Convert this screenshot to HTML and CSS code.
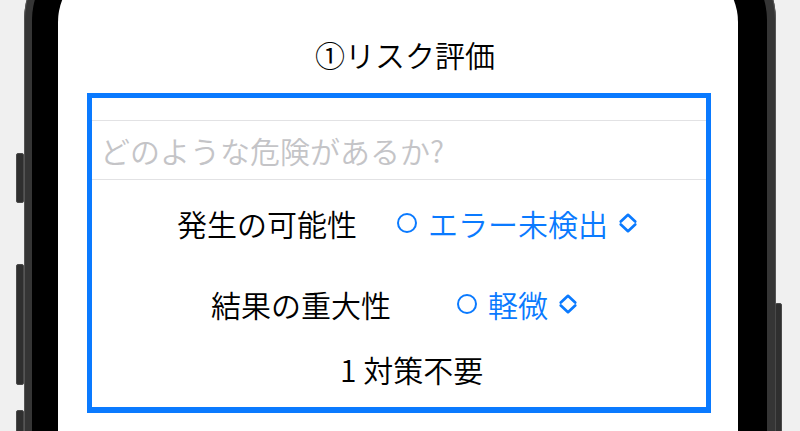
FILE: index.html
```html
<!DOCTYPE html>
<html lang="ja">
<head>
<meta charset="utf-8">
<title>リスク評価</title>
<link rel="stylesheet" href="styles.css">
</head>
<body>
<div class="stage">
  <div class="rail rail-left">
    <span class="key key-mute"></span>
    <span class="key key-vol"></span>
    <span class="key key-vol2"></span>
  </div>
  <div class="phone">
    <div class="bezel">
      <div class="screen">
        <h1 class="title">①リスク評価</h1>
        <section class="card">
          <div class="spacer"></div>
          <div class="field">どのような危険があるか?</div>
          <div class="row row-likely">
            <span class="label">発生の可能性</span>
            <span class="picker">
              <span class="circle"></span>
              <span class="value">エラー未検出</span>
              <svg class="chev" width="18" height="20" viewBox="0 0 18 20"><path d="M1.8 8.5 L9 1.8 L16.2 8.5 M1.8 11.5 L9 18.2 L16.2 11.5" fill="none" stroke="#0a7aff" stroke-width="2.7" stroke-linecap="round" stroke-linejoin="round"/></svg>
            </span>
          </div>
          <div class="row row-severity">
            <span class="label">結果の重大性</span>
            <span class="picker">
              <span class="circle"></span>
              <span class="value">軽微</span>
              <svg class="chev" width="18" height="20" viewBox="0 0 18 20"><path d="M1.8 8.5 L9 1.8 L16.2 8.5 M1.8 11.5 L9 18.2 L16.2 11.5" fill="none" stroke="#0a7aff" stroke-width="2.7" stroke-linecap="round" stroke-linejoin="round"/></svg>
            </span>
          </div>
          <div class="row row-result">1 対策不要</div>
        </section>
      </div>
    </div>
  </div>
  <div class="rail rail-right">
    <span class="key key-power"></span>
  </div>
</div>
</body>
</html>
```
FILE: styles.css
```css
html, body {
  margin: 0;
  padding: 0;
}
body {
  width: 800px;
  height: 431px;
  overflow: hidden;
  background: #f0f0f0;
  font-family: "Noto Sans CJK JP", "Noto Sans", sans-serif;
}
.stage {
  display: flex;
  align-items: flex-start;
  margin-top: -60px;
}
.rail {
  display: flex;
  flex-direction: column;
}
.rail-left {
  width: 8px;
  margin-left: 16px;
}
.rail-right {
  width: 7px;
  margin-left: -1px;
}
.key {
  display: block;
  background: #2f2f2f;
  border: 1px solid #4a4a4a;
  border-radius: 2px;
  box-sizing: border-box;
}
.key-mute { margin-top: 213px; height: 50px; }
.key-vol { margin-top: 61px; height: 121px; }
.key-vol2 { margin-top: 25px; height: 80px; }
.key-power { margin-top: 363px; height: 200px; }

.phone {
  width: 752px;
  flex: none;
  box-sizing: border-box;
  padding: 8px 9px 0 8px;
  background: #353535;
  border-radius: 80px 80px 0 0;
  box-shadow: inset 1px 0 0 #555, inset -1px 0 0 #555;
}
.bezel {
  background: #000;
  padding: 14px 29px 0 26px;
  border-radius: 72px 72px 0 0;
}
.screen {
  background: #fff;
  height: 560px;
  border-radius: 60px 60px 0 0;
  padding-top: 72px;
  box-sizing: border-box;
}
.title {
  margin: 0;
  font-size: 30px;
  font-weight: 350;
  line-height: 40px;
  height: 40px;
  text-align: center;
  color: #000;
  padding-left: 14px;
}
.card {
  margin: 19px 0 0 29px;
  width: 624px;
  height: 320px;
  box-sizing: border-box;
  border: 5px solid #0a7aff;
  border-bottom-width: 6px;
  display: flex;
  flex-direction: column;
  font-size: 30px;
  font-weight: 350;
}
.spacer {
  height: 22px;
  border-bottom: 1px solid #e2e2e4;
}
.field {
  height: 58px;
  line-height: 58px;
  padding-left: 8px;
  color: #c4c4c7;
  border-bottom: 1px solid #e2e2e4;
}
.row {
  display: flex;
  align-items: center;
  color: #000;
}
.row-likely {
  height: 86px;
  padding-left: 85px;
}
.row-severity {
  height: 76px;
  padding-left: 119px;
}
.row-likely .picker { margin-left: 40px; }
.row-severity .picker { margin-left: 66px; }
.row-result {
  height: 54px;
  padding-left: 248px;
}
.picker {
  display: flex;
  align-items: center;
  color: #0a7aff;
}
.circle {
  flex: none;
  display: block;
  width: 20px;
  height: 20px;
  box-sizing: border-box;
  border: 2.6px solid #0a7aff;
  border-radius: 50%;
  margin-right: 11px;
}
.chev {
  flex: none;
  display: block;
  width: 18px;
  height: 20px;
  margin-left: 11px;
}
```
